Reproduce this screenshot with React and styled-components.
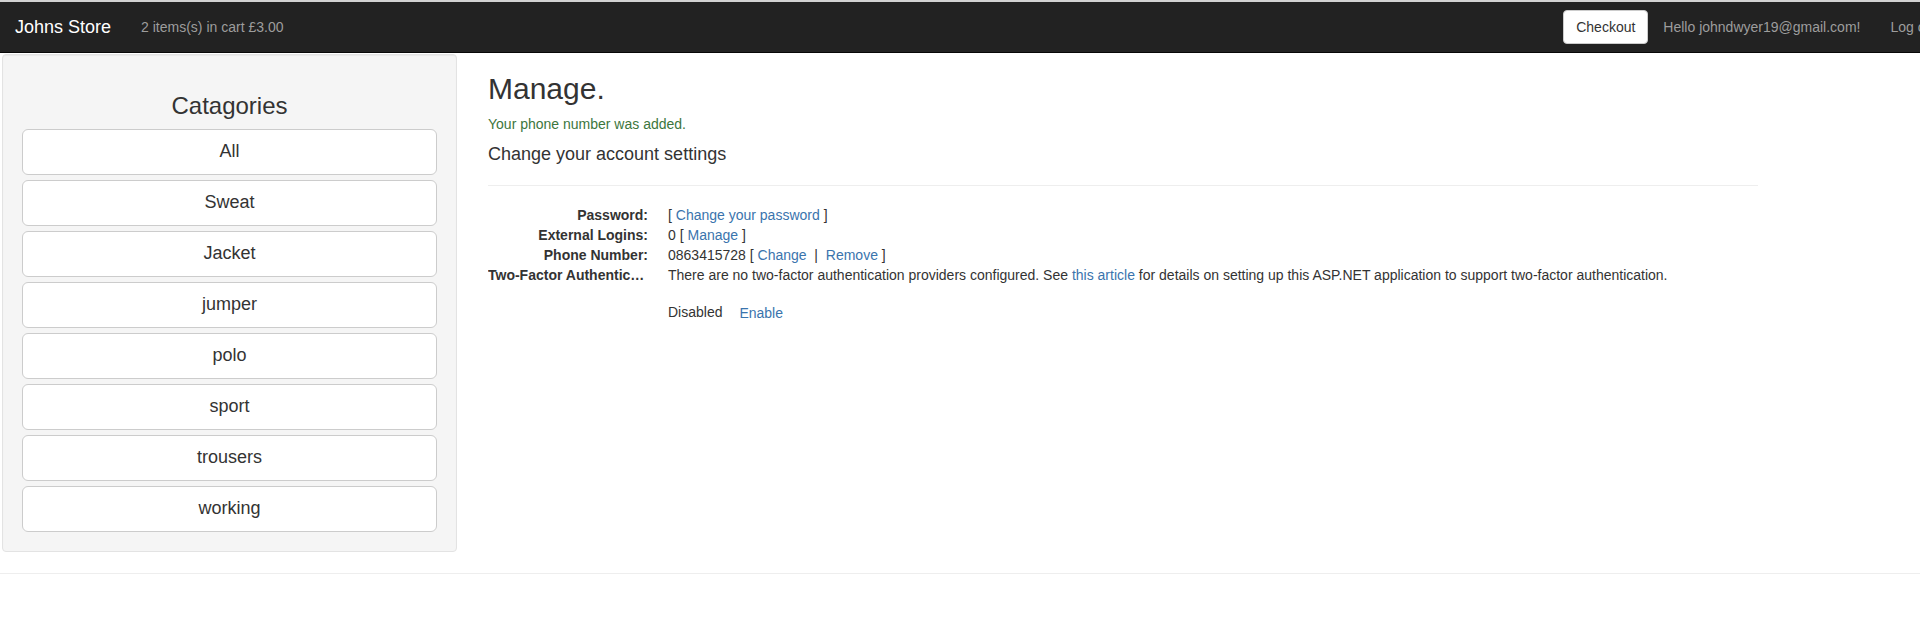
import React from "react";
import styled, { createGlobalStyle } from "styled-components";

const GlobalStyle = createGlobalStyle`
  html, body {
    margin: 0;
    padding: 0;
    overflow: hidden;
    background: #fff;
  }
  body {
    font-family: "Liberation Sans", Arial, Helvetica, sans-serif;
    font-size: 14px;
    line-height: 1.42857;
    color: #333;
  }
  * {
    box-sizing: border-box;
  }
`;

const Page = styled.div`
  width: 1920px;
  border-top: 2px solid #d2d2d2;
  overflow: hidden;
`;

const Navbar = styled.nav`
  height: 51px;
  background: #222;
  border-bottom: 1px solid #080808;
  display: flex;
  align-items: center;
`;

const NavLeft = styled.div`
  flex: 1;
  display: flex;
  align-items: center;
`;

const Brand = styled.a`
  padding: 0 15px;
  font-size: 18px;
  line-height: 20px;
  color: #fff;
  text-decoration: none;
`;

const NavText = styled.a`
  padding: 15px;
  line-height: 20px;
  color: #9d9d9d;
  text-decoration: none;
  white-space: nowrap;
`;

const NavRight = styled.div`
  display: flex;
  align-items: center;
  flex: none;
  margin-right: -28px;
`;

const CheckoutButton = styled.button`
  font-family: inherit;
  font-size: 14px;
  line-height: 20px;
  padding: 6px 12px;
  color: #333;
  background: #fff;
  border: 1px solid #ccc;
  border-radius: 4px;
`;

const Body = styled.div`
  display: flex;
  align-items: flex-start;
  padding-left: 2px;
  margin-top: 1px;
`;

const Sidebar = styled.aside`
  width: 455px;
  flex: none;
  background: #f5f5f5;
  border: 1px solid #e3e3e3;
  border-radius: 4px;
  padding: 19px;
  box-shadow: inset 0 1px 1px rgba(0, 0, 0, 0.05);
`;

const SideTitle = styled.h3`
  font-size: 24px;
  font-weight: 500;
  line-height: 1.1;
  margin: 19px 0 10px;
  text-align: center;
`;

const CategoryList = styled.div`
  display: flex;
  flex-direction: column;
  gap: 5px;
`;

const CategoryButton = styled.button`
  height: 46px;
  font-family: inherit;
  font-size: 18px;
  line-height: 1.3333;
  padding: 10px 16px;
  color: #333;
  background: #fff;
  border: 1px solid #ccc;
  border-radius: 6px;
  text-align: center;
`;

const Main = styled.main`
  width: 1270px;
  margin-left: 31px;
`;

const Title = styled.h2`
  font-size: 30px;
  font-weight: 500;
  line-height: 1.1;
  margin: 18px 0 10px;
`;

const Status = styled.p`
  color: #3c763d;
  margin: 0 0 10px;
`;

const SubTitle = styled.h4`
  font-size: 18px;
  font-weight: 500;
  line-height: 1.1;
  margin: 10px 0 10px;
`;

const Rule = styled.hr`
  margin: ${(p) => p.$m || "20px 0"};
  border: 0;
  border-top: 1px solid #eee;
`;

const Details = styled.dl`
  display: grid;
  grid-template-columns: 160px 1fr;
  column-gap: 20px;
  margin: 1px 0 20px;
`;

const Term = styled.dt`
  font-weight: 700;
  text-align: right;
  white-space: nowrap;
  overflow: hidden;
  text-overflow: ellipsis;
`;

const Desc = styled.dd`
  margin: 0;
`;

const Link = styled.a`
  color: #3a74ad;
  text-decoration: none;
`;

const Para = styled.p`
  margin: 0 0 10px;
`;

const LinkButton = styled.button`
  font-family: inherit;
  font-size: 14px;
  line-height: 20px;
  padding: 6px 12px;
  border: 1px solid transparent;
  background: transparent;
  color: #3a74ad;
`;

const TwoFactorForm = styled.div`
  display: flex;
  align-items: center;
`;

const categories = ["All", "Sweat", "Jacket", "jumper", "polo", "sport", "trousers", "working"];

export default function App() {
  return (
    <Page>
      <GlobalStyle />
      <Navbar>
        <NavLeft>
          <Brand href="#">Johns Store</Brand>
          <NavText href="#">2 items(s) in cart £3.00</NavText>
        </NavLeft>
        <NavRight>
          <CheckoutButton>Checkout</CheckoutButton>
          <NavText href="#">Hello johndwyer19@gmail.com!</NavText>
          <NavText href="#">Log off</NavText>
        </NavRight>
      </Navbar>

      <Body>
        <Sidebar>
          <SideTitle>Catagories</SideTitle>
          <CategoryList>
            {categories.map((c) => (
              <CategoryButton key={c}>{c}</CategoryButton>
            ))}
          </CategoryList>
        </Sidebar>

        <Main>
          <Title>Manage.</Title>
          <Status>Your phone number was added.</Status>
          <SubTitle>Change your account settings</SubTitle>
          <Rule />
          <Details>
            <Term>Password:</Term>
            <Desc>
              [ <Link href="#">Change your password</Link> ]
            </Desc>
            <Term>External Logins:</Term>
            <Desc>
              0 [ <Link href="#">Manage</Link> ]
            </Desc>
            <Term>Phone Number:</Term>
            <Desc>
              0863415728 [ <Link href="#">Change</Link> &nbsp;|&nbsp; <Link href="#">Remove</Link> ]
            </Desc>
            <Term>Two-Factor Authentication:</Term>
            <Desc>
              <Para>
                There are no two-factor authentication providers configured. See{" "}
                <Link href="#">this article</Link> for details on setting up this ASP.NET application to
                support two-factor authentication.
              </Para>
              <TwoFactorForm>
                Disabled&nbsp;
                <LinkButton>Enable</LinkButton>
              </TwoFactorForm>
            </Desc>
          </Details>
        </Main>
      </Body>
      <Rule $m="21px 0 0" />
    </Page>
  );
}
